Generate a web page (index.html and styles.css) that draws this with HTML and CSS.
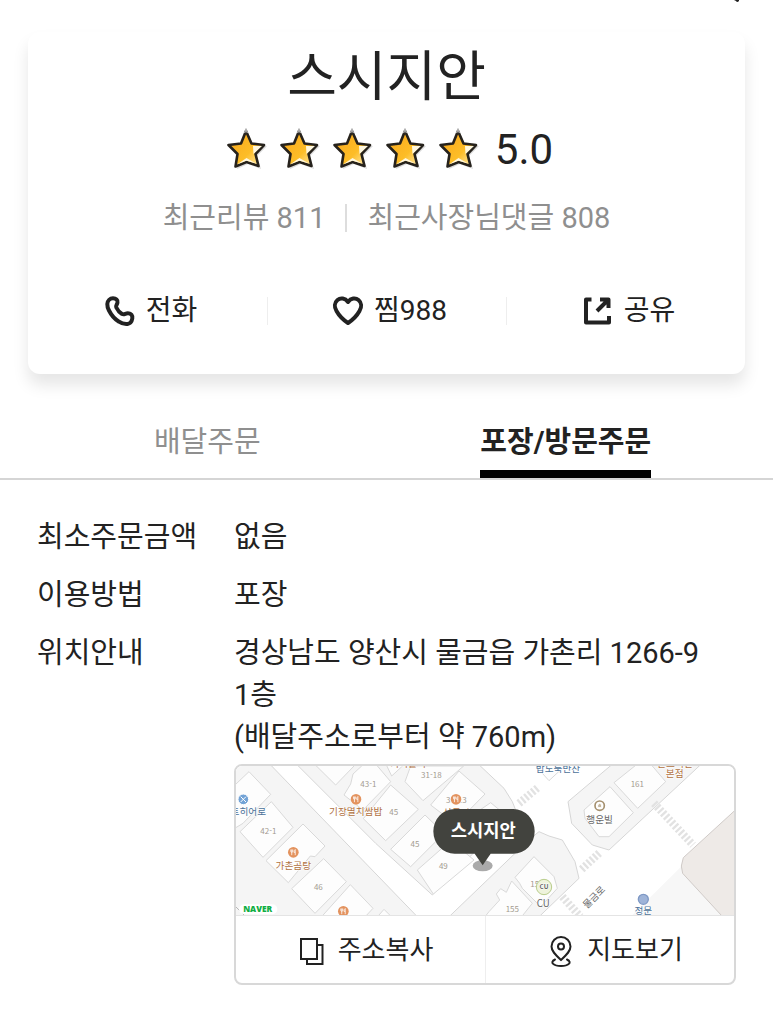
FILE: index.html
```
<!DOCTYPE html>
<html lang="ko">
<head>
    <meta charset="UTF-8">
    <meta name="viewport" content="width=device-width, initial-scale=1.0">
    <title>스시지안</title>
    <link rel="stylesheet" href="styles.css">
</head>
<body>
    <svg class="defs" aria-hidden="true">
        <defs>
            <linearGradient id="shine" x1="0" y1="0" x2="1" y2="1">
                <stop offset="0" stop-color="#f8a51c"/>
                <stop offset="0.6" stop-color="#fdbd27"/>
                <stop offset="1" stop-color="#fff3c4"/>
            </linearGradient>
            <symbol id="star" viewBox="0 0 44 44">
                <path d="M22 5 L27 17 L41 18 L31 28 L35 41 L22 36 L11 41 L13 28 L4 18 L17 17 Z" fill="#b5b5b5" opacity="0.5"/>
                <path d="M20 3 L25.500 15.500 L38 17 L29.500 26 L32.500 38 L20.500 34 L9.500 38.500 L11.500 26 L2.500 17 L15 15.500 Z" fill="url(#shine)" stroke="#26221c" stroke-width="2.600" stroke-linejoin="round"/>
                <path d="M27 18 L36 18 L27.500 26 Z M11 36.500 L20.500 30 L30 35.500 L20.500 32.800 Z" fill="#fff8e0"/>
                <path d="M18.500 5 L20 1.500 L21.500 5" fill="none" stroke="#aaa" stroke-width="1.500"/>
            </symbol>
            <symbol id="food" viewBox="0 0 36 36">
                <circle cx="18" cy="18" r="17" fill="#e3935f"/>
                <path d="M10 9v6q0 3 3 3v9M16 9v6q0 3-3 3M13 9v9M24 27V9q-4 2-4 9h4" fill="none" stroke="#fff" stroke-width="2.500"/>
            </symbol>
        </defs>
    </svg>

    <header class="topbar">
        <svg class="topbar-icon" viewBox="0 0 10 3" aria-hidden="true"><path d="M3 0h5v1q-2 2-3 0z" fill="#222"/></svg>
    </header>

    <main>
        <section class="card">
            <h1>스시지안</h1>
            <div class="rating">
                <svg class="star"><use href="#star"/></svg>
                <svg class="star"><use href="#star"/></svg>
                <svg class="star"><use href="#star"/></svg>
                <svg class="star"><use href="#star"/></svg>
                <svg class="star"><use href="#star"/></svg>
                <span class="score">5.0</span>
            </div>
            <div class="reviews">
                <span>최근리뷰 811</span>
                <span class="bar"></span>
                <span>최근사장님댓글 808</span>
            </div>
            <div class="actions">
                <button type="button">
                    <svg class="icon" viewBox="0 0 32 32"><path d="M3.300 9C3.500 5.500 6 3.300 9 3.300C12 3.300 14 5 13.500 7.500C13.200 9.500 11.500 10.500 12.300 12.500C13.500 15 15.500 17.500 18 19C20.500 20 21.500 18 24.300 18.300C27 18.500 28.800 20.500 28.300 23.500C27.800 26.500 26.500 28.500 23.500 29C20.500 29.300 17.500 28.500 15 26.700C10.500 24 7 19.500 5 15.500C4 13.500 3.200 11 3.300 9Z"/></svg>
                    <span>전화</span>
                </button>
                <button type="button">
                    <svg class="icon" viewBox="0 0 32 32"><path d="M16 7C13 3 8.500 2.500 5.500 5C2.500 7.500 2 12 4.500 16C7 20.500 11.500 25 16 28C20.500 25 25 20.500 27.500 16C30 12 29.500 7.500 26.500 5C23.500 2.500 19 3 16 7Z"/></svg>
                    <span>찜988</span>
                </button>
                <button type="button">
                    <svg class="icon share" viewBox="0 0 32 32"><path d="M9.500 4.500H4V27.500H27V21M18 4.500H26.500V13M26 5L15 16"/></svg>
                    <span>공유</span>
                </button>
            </div>
        </section>

        <nav class="tabs">
            <button type="button">배달주문</button>
            <button type="button" class="active">포장/방문주문</button>
        </nav>

        <dl class="info">
            <dt>최소주문금액</dt>
            <dd>없음</dd>
            <dt>이용방법</dt>
            <dd>포장</dd>
            <dt>위치안내</dt>
            <dd>
                경상남도 양산시 물금읍 가촌리 1266-9<br>
                1층<br>
                (배달주소로부터 약 760m)
                <div class="map-box">
                    <svg class="map" viewBox="18 18 1500 447" preserveAspectRatio="xMidYMid slice" role="img" aria-label="지도">
                        <rect x="0" y="0" width="1540" height="480" fill="#fff"/>
                        <!-- blocks -->
                        <g fill="#f5f5f5" stroke="#d6d6d6" stroke-width="3">
                            <path d="M0 0H112L128 18L560 465L575 480H0Z"/>
                            <path d="M190 0L440 250L610 405L860 150L850 125L825 85L735 0Z"/>
                            <path d="M650 480L905 235L930 215L960 228L1000 240L1038 305L1050 355L920 480Z"/>
                            <path d="M1165 0L1017 125L1028 190L1090 255L1140 270L1430 0Z"/>
                        </g>
                        <path d="M1356 320L1195 480H1490Z" fill="#f7f7f7"/>
                        <path d="M1530 140L1363 293L1357 318L1361 340L1490 480H1530Z" fill="#eeeae7" stroke="#cfcac7" stroke-width="3"/>
                        <path d="M18 438L45 465" stroke="#b8b8b8" stroke-width="3"/>
                        <!-- lots -->
                        <g fill="#fdfdfd" stroke="#d9d9d9" stroke-width="3">
                            <path d="M0 92L60 35L125 103L42 190L12 208L0 195Z"/>
                            <path d="M127 125L192 202L102 292L33 215Z"/>
                            <path d="M222 192L288 258L258 290L244 288L178 368L111 302Z"/>
                            <path d="M284 296L352 365L258 460L188 386Z"/>
                            <path d="M364 374L432 445L390 490H260Z"/>
                            <path d="M244 0L320 75L375 18L350 0Z"/>
                            <path d="M372 42L398 18L430 0L485 65L402 150L345 105L365 72Z"/>
                            <path d="M465 0L488 48L540 0Z"/>
                            <path d="M485 75L568 148L470 242L403 176Z"/>
                            <path d="M588 165L645 220L545 320L485 268Z"/>
                            <path d="M545 18L528 65L582 122L704 18Z"/>
                            <path d="M690 33L768 102L680 192L605 135Z"/>
                            <path d="M785 128L830 165L740 260L665 210Z"/>
                            <path d="M665 242L735 300L613 402L565 330Z"/>
                            <path d="M915 290L975 350L985 385L935 440L880 385L872 370L858 352Z"/>
                            <path d="M848 363L910 430L870 480H760L780 455L812 420L802 402L815 386L832 397Z"/>
                            <path d="M1240 0L1155 68L1226 145L1310 65L1270 18Z"/>
                            <path d="M1143 80L1213 158L1140 230H1110L1068 175L1065 150Z"/>
                            <path d="M940 40L960 62L1000 25"/>
                            <path d="M450 465L465 448L485 468"/>
                        </g>
                        <!-- crosswalks -->
                        <g fill="none" stroke="#e2e2e2" stroke-width="24" stroke-dasharray="7 6">
                            <path d="M870 130L930 80"/>
                            <path d="M1058 328L1115 275"/>
                            <path d="M1275 130L1392 255"/>
                            <path d="M1000 410L1054 470"/>
                        </g>
                        <g class="lot-no">
                            <text x="418" y="82">43-1</text>
                            <text x="494" y="166">45</text>
                            <text x="118" y="222">42-1</text>
                            <text x="268" y="391">46</text>
                            <text x="607" y="54">31-18</text>
                            <text x="682" y="128">31-13</text>
                            <text x="558" y="260">45</text>
                            <text x="643" y="327">49</text>
                            <text x="850" y="457">155</text>
                            <text x="924" y="382">156</text>
                            <text x="1225" y="82">161</text>
                        </g>
                        <g class="place food">
                            <use href="#food" x="364" y="101" width="34" height="34"/>
                            <text x="380" y="166">기장멸치쌈밥</text>
                            <use href="#food" x="176" y="260" width="34" height="34"/>
                            <text x="193" y="326">가촌곰탕</text>
                            <use href="#food" x="326" y="437" width="34" height="34"/>
                            <use href="#food" x="664" y="101" width="34" height="34"/>
                            <text x="682" y="168">상국시</text>
                            <text x="538" y="22">가마솥국</text>
                            <text x="1338" y="22">본스치킨</text>
                            <text x="1337" y="52">본점</text>
                        </g>
                        <g class="place shop">
                            <circle cx="43" cy="118" r="16" fill="#73a3d6"/>
                            <path d="M35 110l16 16M51 110l-16 16" stroke="#fff" stroke-width="3"/>
                            <text x="58" y="166">트히어로</text>
                            <text x="987" y="36">밥도둑반찬</text>
                            <circle cx="1243" cy="418" r="15" fill="#9fb4d8" stroke="#7f99c5" stroke-width="4"/>
                            <text x="1243" y="463">정문</text>
                        </g>
                        <g class="place etc">
                            <circle cx="1112" cy="137" r="14" fill="#fff" stroke="#a5906e" stroke-width="5"/>
                            <path d="M1106 143v-8l6-6 6 6v8z" fill="#c5b79f"/>
                            <text x="1112" y="189">행운빌</text>
                            <circle cx="945" cy="381" r="23" fill="#eef3dc" stroke="#b9cd8c" stroke-width="3"/>
                            <text class="cu" x="945" y="388">CU</text>
                            <text x="943" y="440">CU</text>
                            <text transform="translate(1102 419) rotate(-45)">물금로</text>
                        </g>
                        <rect x="30" y="433" width="115" height="30" rx="15" fill="#fff"/>
                        <text class="naver" x="86" y="456">NAVER</text>
                        <!-- marker -->
                        <ellipse cx="761" cy="317" rx="30" ry="17" fill="#aaa"/>
                        <path d="M677 147H853A64 67 0 0 1 853 281H785L761 316L737 281H677A64 67 0 0 1 677 147Z" fill="#42433e"/>
                        <text class="marker" x="763" y="231">스시지안</text>
                    </svg>
                    <div class="map-buttons">
                        <button type="button">
                            <svg class="icon thin" viewBox="0 0 32 32"><path d="M5 4H21V24H5ZM21 10H26.500V29H11V24"/></svg>
                            <span>주소복사</span>
                        </button>
                        <button type="button">
                            <svg class="icon thin" viewBox="0 0 32 32"><path d="M16 25C10 19.500 6.500 16 6.500 11.500A9.500 9.500 0 0 1 25.500 11.500C25.500 16 22 19.500 16 25Z"/><circle cx="16" cy="11.500" r="3"/><path d="M10 24.500C4 27.500 9 31 16 31S28 27.500 22 24.500"/></svg>
                            <span>지도보기</span>
                        </button>
                    </div>
                </div>
            </dd>
        </dl>
    </main>
</body>
</html>
```
FILE: styles.css
```
* {
    box-sizing: border-box;
}
body {
    margin: 0;
    background: #fff;
    color: #222;
    font-family: Roboto, "Noto Sans CJK KR", sans-serif;
    font-size: 29px;
}
button {
    padding: 0;
    border: 0;
    background: none;
    color: inherit;
    font: inherit;
    cursor: pointer;
}
.defs {
    display: block;
    width: 0;
    height: 0;
}
.topbar {
    display: flex;
    justify-content: flex-end;
    height: 32px;
    padding-right: 32px;
}
.topbar-icon {
    width: 10px;
    height: 3px;
}
.card {
    margin: 0 28px;
    padding: 14px 0 43px;
    border-radius: 12px;
    background: #fff;
    box-shadow: 0 11px 16px rgba(0, 0, 0, 0.1);
}
h1 {
    margin: 0;
    font-size: 54px;
    font-weight: 400;
    line-height: 64px;
    text-align: center;
}
.rating {
    display: flex;
    justify-content: center;
    align-items: center;
    gap: 9px;
    margin-top: 16px;
    padding-left: 6px;
    line-height: 48px;
}
.star {
    width: 44px;
    height: 44px;
}
.score {
    margin-left: 4px;
    font-size: 42px;
}
.reviews {
    display: flex;
    justify-content: center;
    align-items: center;
    gap: 20px;
    margin-top: 26px;
    color: #8f8f8f;
    line-height: 36px;
}
.bar {
    width: 2px;
    height: 28px;
    background: #ddd;
}
.actions {
    display: grid;
    grid-template-columns: repeat(3, 1fr);
    margin-top: 55px;
    font-size: 28px;
}
.actions button {
    display: flex;
    justify-content: center;
    align-items: center;
    gap: 10px;
    padding-left: 6px;
    line-height: 40px;
}
.actions button + button {
    background: linear-gradient(#eee, #eee) left center / 1px 28px no-repeat;
}
.icon {
    width: 32px;
    height: 32px;
    fill: none;
    stroke: #222;
    stroke-width: 4;
    stroke-linejoin: round;
    stroke-linecap: round;
}
.icon.share {
    stroke-linecap: butt;
}
.icon.thin {
    stroke-width: 2;
    stroke-linejoin: miter;
}
.tabs {
    display: grid;
    grid-template-columns: 1fr 1fr;
    justify-items: center;
    margin-top: 30px;
    padding: 14px 28px 0;
    border-bottom: 2px solid #d5d5d5;
}
.tabs button {
    padding-bottom: 4px;
    border-bottom: 8px solid transparent;
    color: #8f8f8f;
    line-height: 48px;
}
.tabs .active {
    border-color: #000;
    color: #222;
    font-weight: 700;
}
.info {
    display: grid;
    grid-template-columns: 197px 1fr;
    row-gap: 16px;
    margin: 0;
    padding: 36px 37px;
    line-height: 42px;
}
.info dd {
    margin: 0;
}
.map-box {
    margin-top: 6px;
    border: 2px solid #d8d8d8;
    border-radius: 8px;
    overflow: hidden;
}
.map {
    display: block;
    width: 100%;
    height: 149px;
    font-family: "Noto Sans CJK KR", sans-serif;
    text-anchor: middle;
}
.lot-no {
    fill: #a39b90;
    font-size: 24px;
}
.place {
    font-size: 29px;
    paint-order: stroke;
    stroke: #fff;
    stroke-width: 3px;
}
.place circle,
.place path {
    paint-order: normal;
}
.food {
    fill: #b0713f;
}
.shop {
    fill: #4c7299;
}
.etc {
    fill: #666;
}
.cu {
    font-size: 19px;
    font-weight: 700;
}
.naver {
    fill: #0fae43;
    font-family: "Open Sans", sans-serif;
    font-size: 25px;
    font-weight: 800;
}
.marker {
    fill: #fff;
    font-size: 53px;
    font-weight: 700;
}
.map-buttons {
    display: grid;
    grid-template-columns: 1fr 1fr;
    border-top: 1px solid #e4e4e4;
    font-size: 26px;
}
.map-buttons button {
    display: flex;
    justify-content: center;
    align-items: center;
    gap: 10px;
    padding: 2px 0 0 8px;
    line-height: 65px;
}
.map-buttons button + button {
    border-left: 1px solid #eee;
}
```
